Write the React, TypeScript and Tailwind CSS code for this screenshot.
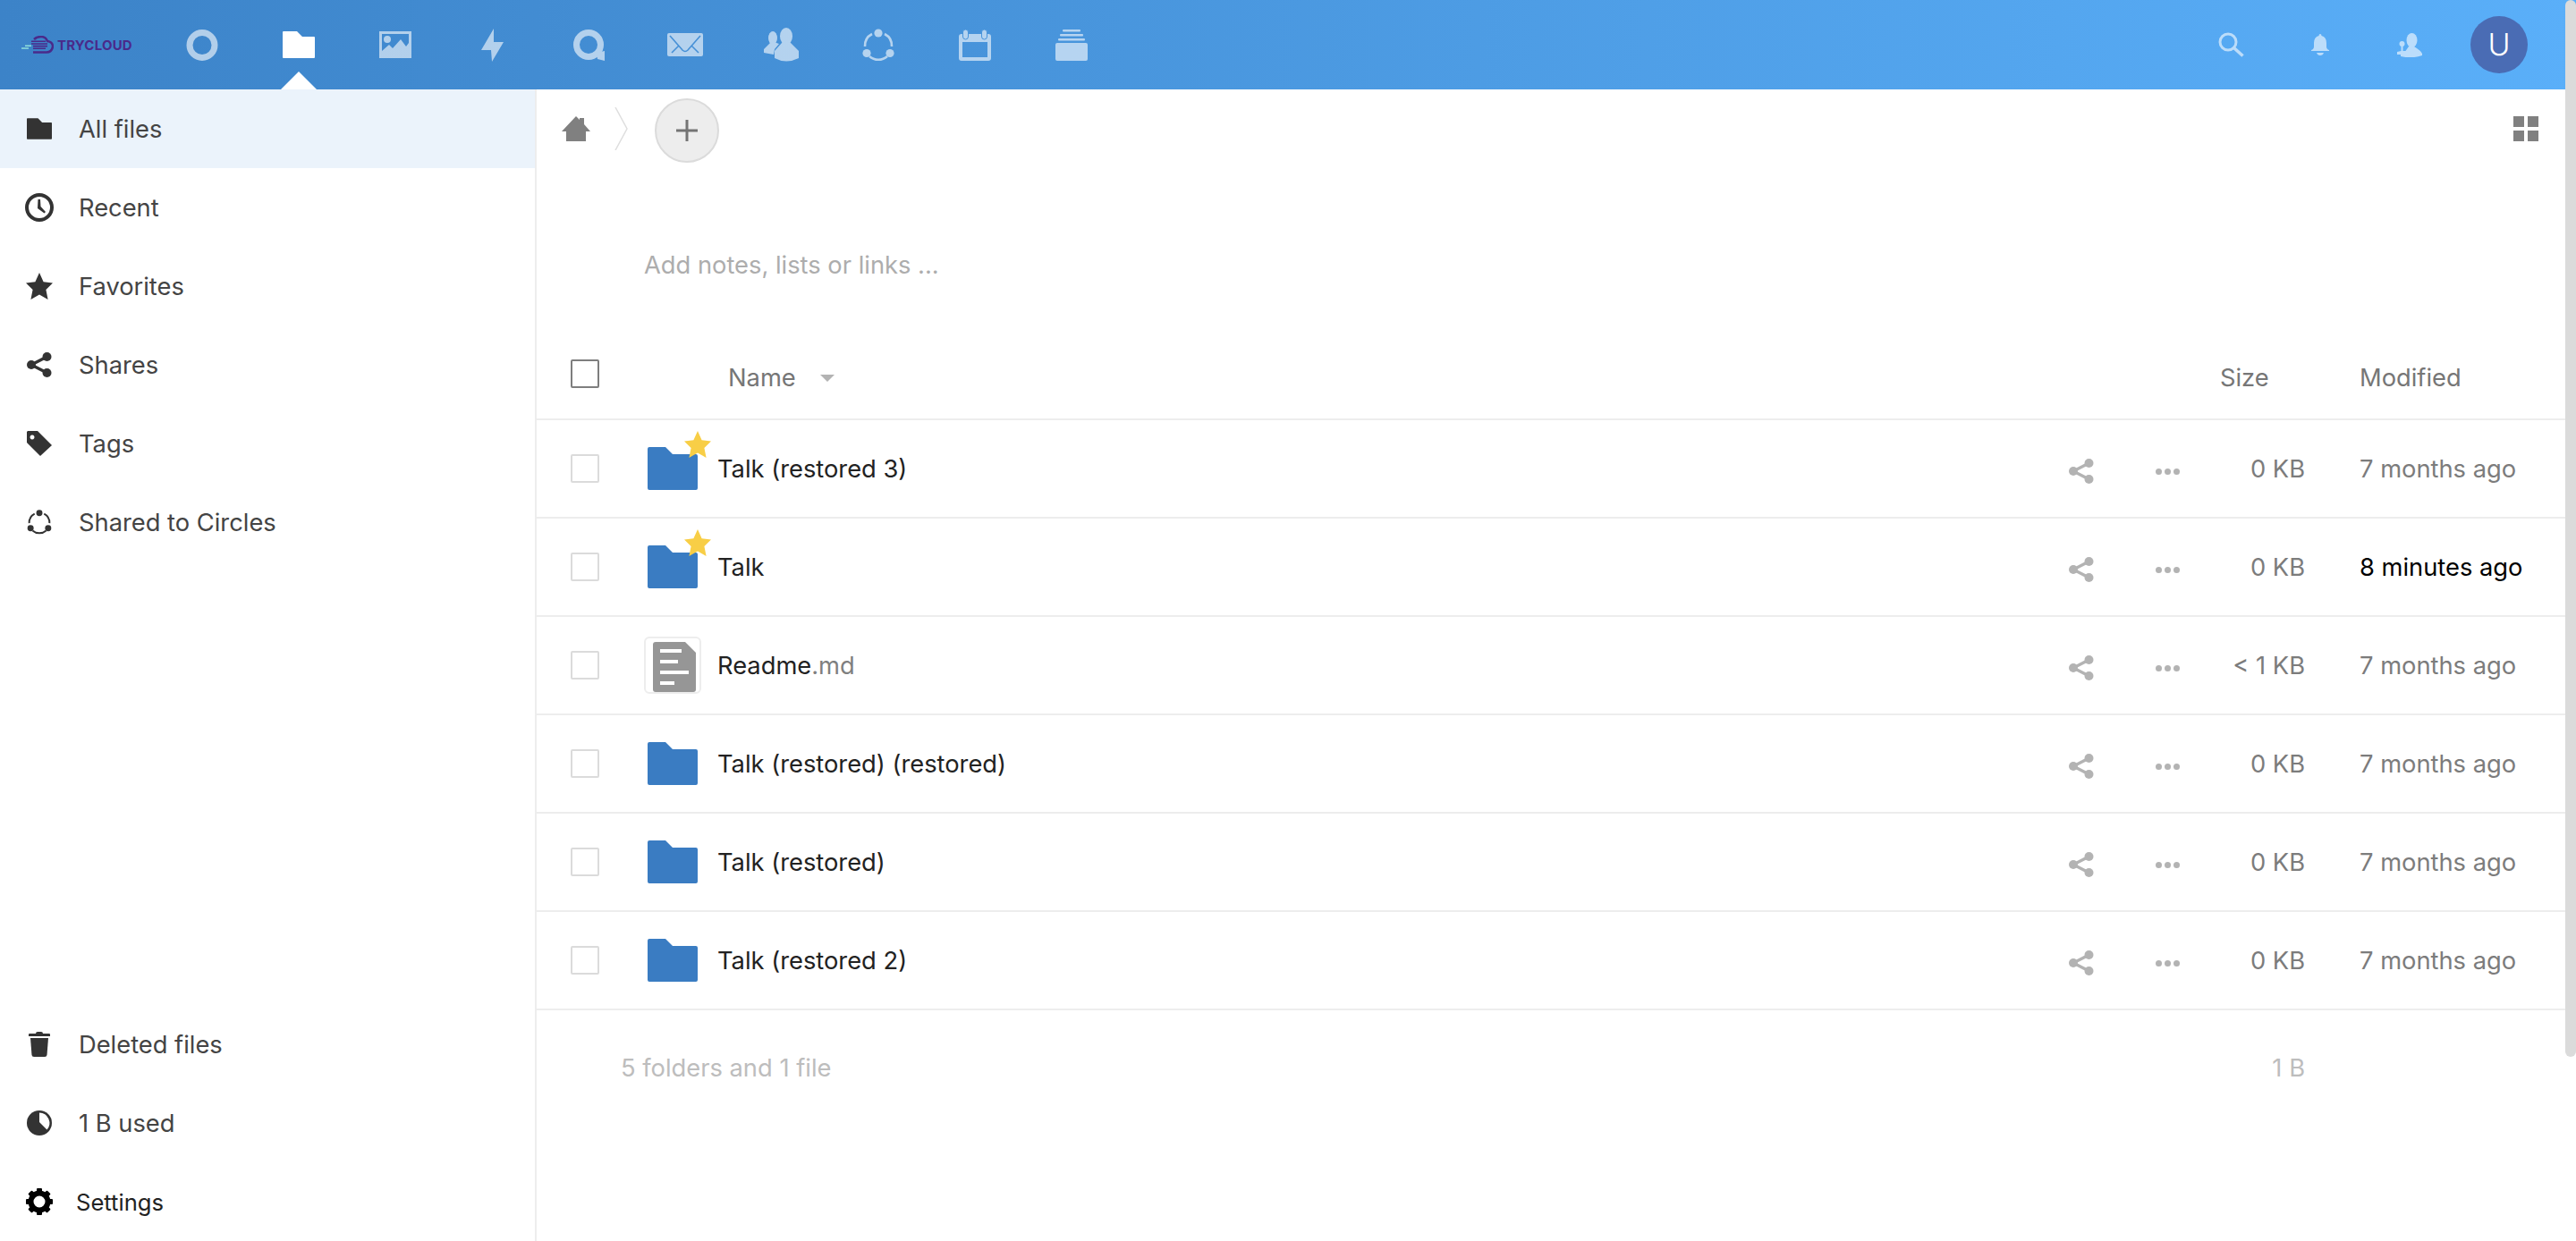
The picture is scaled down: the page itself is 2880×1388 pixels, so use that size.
import React from 'react';

type IconProps = { className?: string };

const FolderIcon = ({ className }: IconProps) => (
  <svg viewBox="0 0 36 30" className={className} fill="currentColor">
    <path d="M1 0H16L22 6H35a1 1 0 0 1 1 1V29a1 1 0 0 1-1 1H1a1 1 0 0 1-1-1V1a1 1 0 0 1 1-1z" />
  </svg>
);

const ActivityIcon = ({ className }: IconProps) => (
  <svg viewBox="0 0 36 35" className={className} fill="none" stroke="currentColor" strokeWidth="7">
    <ellipse cx="18" cy="17.5" rx="14" ry="14" />
  </svg>
);

const PhotoIcon = ({ className }: IconProps) => (
  <svg viewBox="0 0 36 30" className={className} fill="currentColor">
    <path fillRule="evenodd" d="M0 0H36V30H0zM3 3V22L11 15L15 19L24 9L30 17L33 13V3z" />
    <circle cx="9" cy="9" r="4" />
  </svg>
);

const BoltIcon = ({ className }: IconProps) => (
  <svg viewBox="0 0 25 37" className={className} fill="currentColor">
    <path d="M14 0L0 24H11L12 37L25 15H14z" />
  </svg>
);

const TalkIcon = ({ className }: IconProps) => (
  <svg viewBox="0 0 35 35" className={className}>
    <circle cx="17" cy="17" r="13.5" fill="none" stroke="currentColor" strokeWidth="7" />
    <path d="M26 26L35 24L35 35L27 33z" fill="currentColor" />
  </svg>
);

const MailIcon = ({ className }: IconProps) => (
  <svg viewBox="0 0 40 26" className={className}>
    <rect width="40" height="26" rx="2" fill="currentColor" />
    <path d="M3 3L17 19Q20 22 23 19L37 3M5 22L13 14M35 22L27 14" fill="none" stroke="#4791d8" strokeWidth="1.6" />
  </svg>
);

const ContactsIcon = ({ className }: IconProps) => (
  <svg viewBox="0 0 40 38" className={className} fill="currentColor">
    <ellipse cx="10" cy="11.5" rx="5" ry="7.5" />
    <path d="M7 17L0 24V28L11 30L12 24L17 18L14 17z" />
    <ellipse cx="25" cy="9.5" rx="7" ry="9.5" />
    <path d="M20 17L12 26V34Q25 41 39 34V26L30 17z" />
  </svg>
);

const CirclesIcon = ({ className }: IconProps) => (
  <svg viewBox="0 0 36 37" className={className}>
    <path d="M11 6A15 15 0 0 0 3 20M25 6A15 15 0 0 1 33 20M8 31A15 15 0 0 0 28 31" fill="none" stroke="currentColor" strokeWidth="2.6" />
    <circle cx="18" cy="5" r="4.6" fill="currentColor" />
    <circle cx="5" cy="27.5" r="4.6" fill="currentColor" />
    <circle cx="31" cy="27.5" r="4.6" fill="currentColor" />
  </svg>
);

const CalendarIcon = ({ className }: IconProps) => (
  <svg viewBox="0 0 36 35" className={className}>
    <path fillRule="evenodd" fill="currentColor" d="M3 5H33a3 3 0 0 1 3 3V32a3 3 0 0 1-3 3H3a3 3 0 0 1-3-3V8a3 3 0 0 1 3-3zM4 14V31H32V14z" />
    <rect x="4.5" y="0" width="6" height="11" rx="3" fill="currentColor" stroke="#4a95dc" strokeWidth="1" />
    <rect x="25.5" y="0" width="6" height="11" rx="3" fill="currentColor" stroke="#4a95dc" strokeWidth="1" />
  </svg>
);

const DeckIcon = ({ className }: IconProps) => (
  <svg viewBox="0 0 36 35" className={className} fill="currentColor">
    <rect x="8" y="0" width="20" height="2.5" rx="1" />
    <rect x="5" y="5" width="26" height="2.5" rx="1" />
    <rect x="3" y="10" width="30" height="2.5" rx="1" />
    <rect x="0" y="15" width="36" height="20" rx="2" />
  </svg>
);

const SearchIcon = ({ className }: IconProps) => (
  <svg viewBox="0 0 29 28" className={className} fill="none" stroke="currentColor">
    <circle cx="11" cy="11" r="9" strokeWidth="3" />
    <path d="M17.5 17.5L27.5 26.5" strokeWidth="3.6" />
  </svg>
);

const BellIcon = ({ className }: IconProps) => (
  <svg viewBox="0 0 20 24" className={className} fill="currentColor">
    <path d="M10 0Q11.5 0 11.5 2Q17 3.5 17 10V14Q17 17 20 18V19H0V18Q3 17 3 14V10Q3 3.5 8.5 2Q8.5 0 10 0z" />
    <path d="M6 21H14Q13 24 10 24Q7 24 6 21z" />
  </svg>
);

const PersonAddIcon = ({ className }: IconProps) => (
  <svg viewBox="0 0 28 27" className={className} fill="currentColor">
    <ellipse cx="16.5" cy="8" rx="6" ry="8" />
    <path d="M13 15L8 22L4 23V26Q16 29 28 25V23Q27 20 19 15z" />
    <circle cx="5.5" cy="12" r="3" />
    <path d="M4.5 13H6.5V20H10V24H0V21L4.5 20z" />
  </svg>
);

const HomeIcon = ({ className }: IconProps) => (
  <svg viewBox="0 0 32 28" className={className} fill="currentColor">
    <path d="M16 0L20 4V2H25V9L32 17H27V28H5V17H0z" />
  </svg>
);

const GridIcon = ({ className }: IconProps) => (
  <div className={`grid grid-cols-2 gap-1 ${className ?? ''}`}>
    <span className="w-3 h-3 bg-[#808080]" />
    <span className="w-3 h-3 bg-[#808080]" />
    <span className="w-3 h-3 bg-[#808080]" />
    <span className="w-3 h-3 bg-[#808080]" />
  </div>
);

const ClockIcon = ({ className }: IconProps) => (
  <svg viewBox="0 0 32 32" className={className}>
    <circle cx="16" cy="16" r="14" fill="none" stroke="currentColor" strokeWidth="4" />
    <path d="M14.5 7H17L17.5 15L23 21L21.5 22.5L14 17z" fill="currentColor" />
  </svg>
);

const StarIcon = ({ className }: IconProps) => (
  <svg viewBox="0 0 30 30" className={className} fill="currentColor">
    <path d="M15 0L19.6 10.2L30 11.4L22.4 19L24.6 30L15 24.4L5.4 30L7.6 19L0 11.4L10.4 10.2z" />
  </svg>
);

const ShareIcon = ({ className }: IconProps) => (
  <svg viewBox="0 0 28 28" className={className}>
    <path d="M22.5 5L5 14L22.5 23" fill="none" stroke="currentColor" strokeWidth="3.4" />
    <circle cx="22.5" cy="5" r="5" fill="currentColor" />
    <circle cx="5" cy="14" r="5" fill="currentColor" />
    <circle cx="22.5" cy="23" r="5" fill="currentColor" />
  </svg>
);

const TagIcon = ({ className }: IconProps) => (
  <svg viewBox="0 0 28 28" className={className}>
    <path fillRule="evenodd" fill="currentColor" d="M1 0H12L28 16L15 28L0 13V1zM6 4.5a2.5 2.5 0 1 0 0.01 0z" />
  </svg>
);

const TrashIcon = ({ className }: IconProps) => (
  <svg viewBox="0 0 24 28" className={className} fill="currentColor">
    <path d="M8 2Q8 0 10 0H14Q16 0 16 2H23Q24 2 24 3V5H0V3Q0 2 1 2z" />
    <path d="M2 7H22L20.5 26Q20.3 28 18 28H6Q3.7 28 3.5 26z" />
  </svg>
);

const PieIcon = ({ className }: IconProps) => (
  <svg viewBox="0 0 28 28" className={className}>
    <circle cx="14" cy="14" r="14" fill="currentColor" />
    <path d="M14 2.5A11.5 11.5 0 0 1 22.5 21.5L14 13z" fill="#fff" />
  </svg>
);

const GearIcon = ({ className }: IconProps) => (
  <svg viewBox="0 0 30 30" className={className} fill="currentColor">
    <circle cx="15" cy="15" r="9.5" fill="none" stroke="currentColor" strokeWidth="6" />
    {[0, 45, 90, 135, 180, 225, 270, 315].map((deg) => (
      <rect key={deg} x="12" y="0" width="6" height="6" rx="1" transform={`rotate(${deg} 15 15)`} />
    ))}
  </svg>
);

const navIcons = [
  { Icon: ActivityIcon, size: 'w-9 h-[35px]' },
  { Icon: FolderIcon, size: 'w-9 h-[30px]', active: true },
  { Icon: PhotoIcon, size: 'w-9 h-[30px]' },
  { Icon: BoltIcon, size: 'w-[25px] h-[37px]' },
  { Icon: TalkIcon, size: 'w-[35px] h-[35px]' },
  { Icon: MailIcon, size: 'w-10 h-[26px]' },
  { Icon: ContactsIcon, size: 'w-10 h-[38px]' },
  { Icon: CirclesIcon, size: 'w-9 h-[37px]' },
  { Icon: CalendarIcon, size: 'w-9 h-[35px]' },
  { Icon: DeckIcon, size: 'w-9 h-[35px]' },
];

const topLinks = [
  { label: 'All files', Icon: FolderIcon, size: 'w-7 h-6', active: true },
  { label: 'Recent', Icon: ClockIcon, size: 'w-8 h-8' },
  { label: 'Favorites', Icon: StarIcon, size: 'w-8 h-[30px]' },
  { label: 'Shares', Icon: ShareIcon, size: 'w-7 h-7' },
  { label: 'Tags', Icon: TagIcon, size: 'w-7 h-7' },
  { label: 'Shared to Circles', Icon: CirclesIcon, size: 'w-7 h-7' },
];

const files = [
  { name: 'Talk (restored 3)', size: '0 KB', modified: '7 months ago', fav: true },
  { name: 'Talk', size: '0 KB', modified: '8 minutes ago', fav: true, recent: true },
  { name: 'Readme', ext: '.md', size: '< 1 KB', modified: '7 months ago', doc: true },
  { name: 'Talk (restored) (restored)', size: '0 KB', modified: '7 months ago' },
  { name: 'Talk (restored)', size: '0 KB', modified: '7 months ago' },
  { name: 'Talk (restored 2)', size: '0 KB', modified: '7 months ago' },
];

const Header = () => (
  <header className="h-[100px] flex items-center bg-linear-to-r from-[#3c83c8] to-[#5aaff9] text-white">
    <div className="w-[172px] pl-6 flex items-center gap-1">
      <svg viewBox="0 0 36 20" className="w-9 h-5 shrink-0">
        <path d="M14 4Q17 1 22 1Q27 1 29 6Q35 7 35 12Q34 18.5 28 18.5H13" fill="none" stroke="#4a2a8a" strokeWidth="2.5" />
        <path d="M11 6.3H27M11 9H29M13 11.6H29M13 14.3H27" stroke="#4a2a8a" strokeWidth="1.6" />
        <path d="M4 11.3H11M0 14H8" stroke="#8fe0dc" strokeWidth="1.6" />
      </svg>
      <span className="text-[15px] leading-none font-bold text-[#4a2a8a] tracking-[0.2px]">TRYCLOUD</span>
    </div>
    <nav className="flex items-center">
      {navIcons.map(({ Icon, size, active }, i) => (
        <div key={i} className="relative w-[108px] h-[100px] flex items-center justify-center">
          <Icon className={`${size} ${active ? '' : 'opacity-60'}`} />
          {active && (
            <span className="absolute bottom-0 left-1/2 -translate-x-1/2 w-0 h-0 border-x-[20px] border-x-transparent border-b-[20px] border-b-white" />
          )}
        </div>
      ))}
    </nav>
    <div className="ml-auto pr-9 flex items-center">
      <div className="w-[100px] flex justify-center"><SearchIcon className="w-[29px] h-7 opacity-60" /></div>
      <div className="w-[100px] flex justify-center"><BellIcon className="w-5 h-6 opacity-60" /></div>
      <div className="w-[100px] flex justify-center"><PersonAddIcon className="w-7 h-[27px] opacity-60" /></div>
      <div className="w-[100px] flex justify-center">
        <div className="w-16 h-16 rounded-full bg-[#4a6cb4] flex items-center justify-center text-[34px] font-light leading-none">U</div>
      </div>
    </div>
  </header>
);

const NavRow = ({ label, Icon, size, active }: { label: string; Icon: React.FC<IconProps>; size: string; active?: boolean }) => (
  <div className={`h-[88px] flex items-center text-[27.3px] text-[#444] ${active ? 'bg-[#ebf3fb]' : ''}`}>
    <div className="w-[88px] flex justify-center text-[#333]"><Icon className={size} /></div>
    <span className="pt-[2px]">{label}</span>
  </div>
);

const Sidebar = () => (
  <aside className="w-[600px] shrink-0 border-r-2 border-[#ededed] flex flex-col justify-between">
    <div>
      {topLinks.map((l) => <NavRow key={l.label} {...l} />)}
    </div>
    <div>
      <NavRow label="Deleted files" Icon={TrashIcon} size="w-6 h-7" />
      <NavRow label="1 B used" Icon={PieIcon} size="w-7 h-7" />
      <div className="h-[88px] flex items-center text-[25.6px] text-[#222]">
        <div className="w-[88px] flex justify-center text-black"><GearIcon className="w-[30px] h-[30px]" /></div>
        <span className="-ml-[3px] pt-[2px]">Settings</span>
      </div>
    </div>
  </aside>
);

const FileRow = ({ file }: { file: (typeof files)[number] }) => (
  <div className="h-[110px] border-b-2 border-[#ededed] flex items-center text-[27.3px]">
    <span className="ml-[38px] w-8 h-8 rounded-[2px] border-2 border-[#dbdbdb] shrink-0" />
    <div className="relative ml-[50px] w-16 h-16 shrink-0 flex items-center justify-center">
      {file.doc ? (
        <div className="w-16 h-16 rounded-md border-2 border-[#ededed] pl-1 pt-1 flex items-center justify-center">
          <svg viewBox="0 0 48 56" className="w-12 h-14">
            <path d="M3 0H36L48 12V53a3 3 0 0 1-3 3H3a3 3 0 0 1-3-3V3a3 3 0 0 1 3-3z" fill="#969696" />
            <path d="M8 10H32M8 22H28M8 34H40M8 46H24" stroke="#fff" strokeWidth="4" />
          </svg>
        </div>
      ) : (
        <svg viewBox="0 0 56 48" className="w-14 h-12 text-[#3a7cc2]" fill="currentColor">
          <path d="M2 0H20L28 8H54a2 2 0 0 1 2 2V46a2 2 0 0 1-2 2H2a2 2 0 0 1-2-2V2a2 2 0 0 1 2-2z" />
        </svg>
      )}
      {file.fav && <StarIcon className="absolute left-[45px] -top-[10px] w-[30px] h-[30px] text-[#f8ce46]" />}
    </div>
    <div className="ml-[18px] pt-[2px] flex-1 text-[#222]">
      {file.name}
      {file.ext && <span className="text-[#7f7f7f]">{file.ext}</span>}
    </div>
    <div className="w-24 flex justify-center text-[#b3b3b3] pt-1.5"><ShareIcon className="w-7 h-7" /></div>
    <div className="w-24 flex justify-center gap-[3px] pt-1.5">
      <span className="w-[7px] h-[7px] rounded-full bg-[#b3b3b3]" />
      <span className="w-[7px] h-[7px] rounded-full bg-[#b3b3b3]" />
      <span className="w-[7px] h-[7px] rounded-full bg-[#b3b3b3]" />
    </div>
    <div className="w-[106px] pt-[2px] text-right text-[#7c7c7c] whitespace-nowrap">{file.size}</div>
    <div className={`w-[291px] pl-[61px] pt-[2px] whitespace-nowrap ${file.recent ? 'text-black' : 'text-[#7c7c7c]'}`}>{file.modified}</div>
  </div>
);

const Main = () => (
  <main className="flex-1 min-w-0 pr-3">
    <div className="h-[92px] flex items-center pl-7">
      <HomeIcon className="w-8 h-7 text-[#808080] -mt-1" />
      <svg viewBox="0 0 15 48" className="ml-[27px] w-[15px] h-12 -mt-1" fill="none" stroke="#dedede" strokeWidth="1.5">
        <path d="M1 0L14 24L1 48" />
      </svg>
      <button className="ml-[30px] w-[72px] h-[72px] rounded-full bg-[#ededed] border-2 border-[#dbdbdb] flex items-center justify-center">
        <svg viewBox="0 0 24 24" className="w-6 h-6" fill="#747474"><path d="M10.5 0H13.5V10.5H24V13.5H13.5V24H10.5V13.5H0V10.5H10.5z" /></svg>
      </button>
      <GridIcon className="ml-auto mr-[30px] -mt-1" />
    </div>
    <div className="h-[184px] pt-[88px] pl-[120px] text-[27.3px] leading-[34px] text-[#adadad]">Add notes, lists or links ...</div>
    <div className="h-[94px] border-b-2 border-[#ededed] flex items-center text-[27.3px] text-[#767676]">
      <span className="ml-[38px] -mt-2 w-8 h-8 rounded-[2px] border-2 border-[#7e7e7e] shrink-0" />
      <div className="ml-[144px] pt-[2px] flex-1 flex items-center">
        <span>Name</span>
        <span className="ml-[27px] w-0 h-0 border-x-8 border-x-transparent border-t-8 border-t-[#b3b3b3]" />
      </div>
      <div className="w-[156px] pt-[2px]">Size</div>
      <div className="w-[230px] pt-[2px]">Modified</div>
    </div>
    {files.map((f) => <FileRow key={f.name} file={f} />)}
    <div className="h-[128px] flex items-center text-[27.3px] text-[#bdbdbd]">
      <span className="ml-[94px] pt-[2px] flex-1">5 folders and 1 file</span>
      <span className="mr-[291px] pt-[2px]">1 B</span>
    </div>
  </main>
);

const App: React.FC = () => {
  return (
    <div className="relative w-[2880px] h-[1388px] overflow-hidden bg-white font-[Inter,sans-serif] flex flex-col">
      <Header />
      <div className="flex-1 flex min-h-0">
        <Sidebar />
        <Main />
      </div>
      <div className="absolute top-0 right-0 w-3 h-[1182px] rounded-full bg-[#dbdbdb]" />
    </div>
  );
};

export default App;
